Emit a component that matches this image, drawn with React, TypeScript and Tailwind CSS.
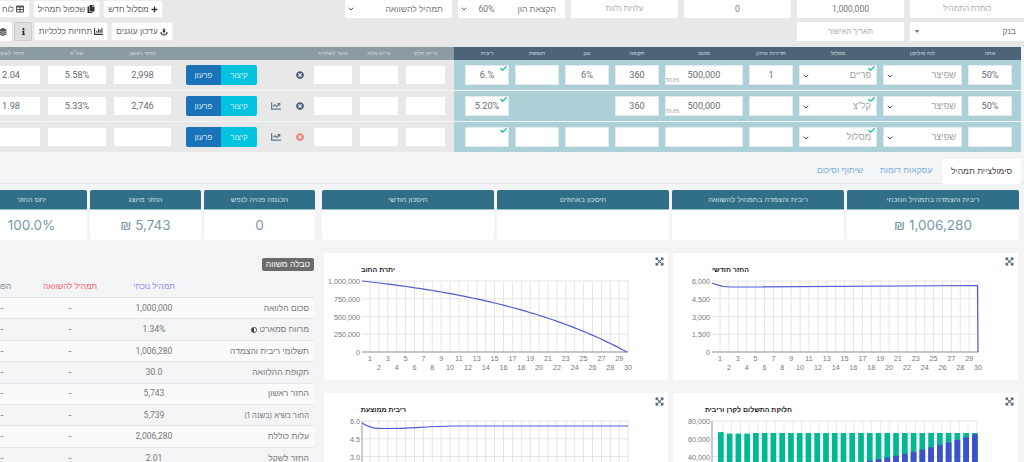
import { ChevronDown } from "lucide-react";
import {
  FaAdjust,
  FaAnchor,
  FaChartBar,
  FaChartLine,
  FaCheck,
  FaCopy,
  FaExpandArrowsAlt,
  FaInfo,
  FaLayerGroup,
  FaPlus,
  FaTable,
  FaTimesCircle,
} from "react-icons/fa";
import type { ReactNode } from "react";

const FONT = "font-['Inter','Liberation_Sans',sans-serif]";
const NARROW = "font-['Roboto','Liberation_Sans',sans-serif]";

function Field({ w, text, muted, select, check }: { w: string; text?: string; muted?: boolean; select?: boolean; check?: boolean }) {
  return (
    <div className={`${w} ${NARROW} h-[20px] relative shrink-0 bg-white border border-[#e6eaec] flex items-center text-[9.2px] ${select ? "justify-start pr-[5px]" : "justify-center"} ${muted ? "text-[#9aa0a6]" : "text-[#666c72]"}`}>
      <span dir={select ? "rtl" : "ltr"}>{text}</span>
      {select && <ChevronDown size={8} strokeWidth={3} className="absolute left-[2px] top-[6px] text-[#555]" />}
      {check && <FaCheck size={7} className="absolute right-[1px] top-[-1px] text-[#1fc9a0]" />}
    </div>
  );
}

function TopBox({ w, children, muted, select }: { w: string; children?: ReactNode; muted?: boolean; select?: boolean }) {
  return (
    <div className={`${w} ${NARROW} h-full shrink-0 relative bg-white flex items-center ${select ? "justify-start pr-[9px]" : "justify-center"} ${muted ? "text-[7.6px] text-[#a5a9ad]" : "text-[8.6px] text-[#777]"}`}>
      {children}
      {select && <ChevronDown size={8} strokeWidth={3} className="absolute left-[2px] top-[5px] text-[#555]" />}
    </div>
  );
}

function ToolBtn({ w, icon, text, cut }: { w: string; icon?: ReactNode; text?: string; cut?: boolean }) {
  return (
    <div className={`${w} h-full shrink-0 bg-white rounded-[2px] border border-[#eee] flex items-center gap-[2px] text-[8.3px] text-[#666] whitespace-nowrap ${cut ? "justify-start pr-[5px]" : "justify-center"}`}>
      {icon}
      {text}
    </div>
  );
}

function Toggle() {
  return (
    <div className="w-[71px] h-[20px] shrink-0 flex rounded-[2px] overflow-hidden text-[8px] text-[#cfe9f2]">
      <div className="w-[36px] bg-[#00c3e0] flex items-center justify-center">קיצור</div>
      <div className="w-[35px] bg-[#1a72b8] flex items-center justify-center">פרעון</div>
    </div>
  );
}

type RowData = {
  pct?: string;
  track: string;
  freq?: string;
  amount?: string;
  term?: string;
  anchor?: string;
  hasExtras: boolean;
  rate?: string;
  first?: string;
  shp?: string;
  ratio?: string;
  trend: boolean;
  danger?: boolean;
};

const ROWS: RowData[] = [
  { pct: "50%", track: "פריים", freq: "1", amount: "500,000", term: "360", anchor: "6%", hasExtras: true, rate: "6.%", first: "2,998", shp: "5.58%", ratio: "2.04", trend: false },
  { pct: "50%", track: 'קל"צ', amount: "500,000", term: "360", hasExtras: false, rate: "5.20%", first: "2,746", shp: "5.33%", ratio: "1.98", trend: true },
  { track: "מסלול", hasExtras: true, trend: true, danger: true },
];

function Row({ r, last }: { r: RowData; last: boolean }) {
  return (
    <div className={`flex h-[30px] pr-[3px] ${last ? "" : "mb-[1px]"}`}>
      <div className="w-[567px] shrink-0 bg-[#abd0d8] flex items-center gap-[6px] pr-[9px]">
        <Field w="w-[44px]" text={r.pct} />
        <Field w="w-[79px]" text="שפיצר" muted select />
        <Field w="w-[78px]" text={r.track} muted select check />
        <Field w="w-[44px]" text={r.freq} />
        <div className="relative">
          <Field w="w-[78px]" text={r.amount} />
          {r.amount && <span className="absolute left-[1px] bottom-[0px] text-[4.5px] text-[#888]">50.0%</span>}
        </div>
        <Field w="w-[44px]" text={r.term} />
        {r.hasExtras ? <Field w="w-[44px]" text={r.anchor} /> : <div className="w-[44px] shrink-0" />}
        {r.hasExtras ? <Field w="w-[44px]" /> : <div className="w-[44px] shrink-0" />}
        <Field w="w-[44px]" text={r.rate} check />
      </div>
      <div className="flex-1 bg-[#e8e8e8] flex items-center gap-[6px] pr-[8px]">
        <Field w="w-[41px]" />
        <Field w="w-[40px]" />
        <Field w="w-[40px]" />
        <div className="w-[44px] shrink-0 flex items-center text-[#4a5d78]">
          <FaTimesCircle size={8} className={`mr-[3px] ${r.danger ? "text-[#f27a7a]" : ""}`} />
          {r.trend && <FaChartLine size={10} className="mr-[15px] text-[#66788a]" />}
        </div>
        <Toggle />
        <div className="w-[2px] shrink-0" />
        <Field w="w-[59px]" text={r.first} />
        <Field w="w-[60px]" text={r.shp} />
        <Field w="w-[60px]" text={r.ratio} />
      </div>
    </div>
  );
}

function Head({ w, t }: { w: string; t?: string }) {
  return <div className={`${w} shrink-0 text-center whitespace-nowrap`}>{t}</div>;
}

const STATS = [
  { w: "w-[172px]", t: "ריבית והצמדה בתמהיל הנוכחי", v: "1,006,280 ₪" },
  { w: "w-[172px]", t: "ריבית והצמדה בתמהיל להשוואה" },
  { w: "w-[172px]", t: "חיסכון באחוזים" },
  { w: "w-[172px]", t: "חיסכון חודשי" },
  { w: "w-[111px] mr-[4px]", t: "הכנסה פנויה לנפש", v: "0" },
  { w: "w-[111px]", t: "החזר מיוצג", v: "5,743 ₪" },
  { w: "w-[111px]", t: "יחס החזר", v: "100.0%" },
];

const COMPARE: [ReactNode, string][] = [
  ["סכום הלוואה", "1,000,000"],
  [<span className="flex items-center gap-[2px]">מרווח סמארט <FaAdjust size={6} className="text-[#444]" /></span>, "1.34%"],
  ["תשלומי ריבית והצמדה", "1,006,280"],
  ["תקופת ההלוואה", "30.0"],
  ["החזר ראשון", "5,743"],
  [<span className="text-[7.5px]">החזר בשיא (בשנה 1)</span>, "5,739"],
  ["עלות כוללת", "2,006,280"],
  ["החזר לשקל", "2.01"],
];

const CATS = Array.from({ length: 30 }, (_, i) => i + 1);

function Axes({ yLabels, title, titleX, strongLeft }: { yLabels: string[]; title: string; titleX: number; strongLeft?: boolean }) {
  const x0 = 39;
  const y0 = 28;
  const step = 8.9;
  const hStep = 17.75;
  return (
    <g fontFamily="Liberation Sans, sans-serif" fontSize="7.2" fill="#777">
      <text x={titleX} y={y0 - 9} fontSize="7" fontWeight="bold" fill="#222" textAnchor="end">{title}</text>
      {CATS.map((c) => {
        const x = 47 + (c - 1) * step;
        return (
          <g key={c}>
            <line x1={x} x2={x} y1={y0} y2={y0 + 71} stroke="#e4e4e4" />
            <text x={x} y={y0 + 80 + (c % 2 === 0 ? 9 : 0)} textAnchor="middle">{c}</text>
          </g>
        );
      })}
      {yLabels.map((l, i) => (
        <g key={l}>
          <line x1={x0} x2={x0 + 266} y1={y0 + i * hStep} y2={y0 + i * hStep} stroke={i === 4 ? "#b5b5b5" : "#e4e4e4"} strokeWidth={i === 4 ? 1.5 : 1} />
          <text x={x0 - 2} y={y0 + i * hStep + 3} textAnchor="end">{l}</text>
        </g>
      ))}
      {strongLeft && <line x1={x0} x2={x0} y1={y0} y2={y0 + 71} stroke="#999" strokeWidth="1" />}
    </g>
  );
}

function ChartCard({ w, children }: { w: string; children: ReactNode }) {
  return (
    <div className={`${w} h-[127px] relative bg-white shrink-0`}>
      <FaExpandArrowsAlt size={9} className="absolute right-[4px] top-[4px] text-[#4a5d70]" />
      {children}
    </div>
  );
}

// the card svgs use card-relative coordinates
function MonthlyChart() {
  return (
    <svg width="345" height="127" className="block" direction="ltr">
      <Axes yLabels={["6,000", "4,500", "3,000", "1,500", "0"]} title="החזר חודשי" titleX={76} />
      <path d="M39 30 C44 32 48 34 58 34 C120 34 180 32.5 304.5 32.5 L305 99" fill="none" stroke="#4f5bd5" strokeWidth="1.2" />
    </svg>
  );
}

function BalanceChart() {
  const g = 1.055;
  const pts = Array.from({ length: 61 }, (_, i) => {
    const t = i / 2;
    const left = (Math.pow(g, 30) - Math.pow(g, t)) / (Math.pow(g, 30) - 1);
    return `${(39 + (t / 30) * 265).toFixed(1)},${(99 - left * 71).toFixed(1)}`;
  }).join(" ");
  return (
    <svg width="345" height="127" className="block" direction="ltr">
      <Axes yLabels={["1,000,000", "750,000", "500,000", "250,000", "0"]} title="יתרת החוב" titleX={72} />
      <polyline points={pts} fill="none" stroke="#4f5bd5" strokeWidth="1.2" />
    </svg>
  );
}

function SplitChart() {
  const scale = 71 / 80000;
  return (
    <svg width="345" height="127" className="block" direction="ltr">
      <g fontFamily="Liberation Sans, sans-serif" fontSize="7.2" fill="#777">
        <text x={119} y={19} fontSize="7" fontWeight="bold" fill="#222" textAnchor="end">חלוקת התשלום לקרן וריבית</text>
        {CATS.map((c) => (
          <line key={c} x1={41 + c * 8.76} x2={41 + c * 8.76} y1={28} y2={99} stroke="#ececec" />
        ))}
        {["80,000", "60,000", "40,000", "20,000"].map((l, i) => (
          <g key={l}>
            <line x1={39} x2={305} y1={28 + i * 17.75} y2={28 + i * 17.75} stroke="#e4e4e4" />
            <text x={37} y={31 + i * 17.75} textAnchor="end">{l}</text>
          </g>
        ))}
        <line x1={39} x2={39} y1={28} y2={99} stroke="#999" />
      </g>
      {CATS.map((c) => {
        const x = 45 + (c - 1) * 8.76;
        const top = c === 1 ? 67500 : c < 5 ? 65800 : 66500;
        const principal = 65000 * Math.pow(0.95, 30 - c);
        return (
          <g key={c}>
            <rect x={x} y={99 - top * scale} width={5.7} height={top * scale} fill="#00b894" />
            <rect x={x} y={99 - principal * scale} width={5.7} height={principal * scale} fill="#4050cc" />
          </g>
        );
      })}
    </svg>
  );
}

function RateChart() {
  return (
    <svg width="345" height="127" className="block" direction="ltr">
      <Axes yLabels={["6.0", "4.5", "3.0", "1.5", "0"]} title="ריבית ממוצעת" titleX={83} strongLeft />
      <path d="M39 30 C46 35 52 35.5 62 35.5 C90 35.5 100 33.5 130 33 L305 33" fill="none" stroke="#4f5bd5" strokeWidth="1.2" />
    </svg>
  );
}

export default function App() {
  return (
    <div dir="rtl" className={`${FONT} w-[1024px] h-[462px] overflow-hidden bg-[#f3f4f6]`}>
      <div className="w-[1024px] h-[47px] bg-[#e8e8e8] flex flex-col">
        <div className="h-[18px] flex gap-[6px] shrink-0">
          <TopBox w="w-[114px]" muted>כותרת התמהיל</TopBox>
          <TopBox w="w-[107px]">1,000,000</TopBox>
          <TopBox w="w-[107px]">0</TopBox>
          <TopBox w="w-[107px]" muted>עלויות נלוות</TopBox>
          <TopBox w="w-[107px]" select>
            <span className="flex gap-[23px]">
              <span>הקצאת הון</span>
              <span>60%</span>
            </span>
          </TopBox>
          <TopBox w="w-[107px]" select>תמהיל להשוואה</TopBox>
          <div className="w-[170px] shrink-0" />
          <div className="flex gap-[3px] h-full shrink-0">
            <ToolBtn w="w-[60px]" icon={<FaPlus size={7} className="text-[#333]" />} text="מסלול חדש" />
            <ToolBtn w="w-[67px]" icon={<FaCopy size={8} className="text-[#333]" />} text="שכפול תמהיל" />
            <ToolBtn w="w-[60px]" cut icon={<FaTable size={8} className="text-[#555]" />} text="לוח סילוקין" />
          </div>
        </div>
        <div className="h-[19px] mt-[4px] flex gap-[6px] shrink-0">
          <div className="w-[114px] h-full shrink-0 relative bg-white flex items-center pr-[8px] text-[8.6px] text-[#777]">
            בנק
            <span className="absolute left-[5px] top-[8px] w-0 h-0 border-x-[2px] border-t-[3px] border-x-transparent border-t-[#666]" />
          </div>
          <TopBox w="w-[107px]" muted>תאריך האישור</TopBox>
          <div className="w-[612px] shrink-0" />
          <div className="flex gap-[3px] h-full shrink-0">
            <ToolBtn w="w-[62px]" icon={<FaAnchor size={8} className="text-[#333]" />} text="עדכון עוגנים" />
            <ToolBtn w="w-[74px]" icon={<FaChartBar size={9} className="text-[#333]" />} text="תחזיות כלכליות" />
            <div className="w-[18px] h-full shrink-0 -mr-[1px] bg-[#dedede] border border-[#ccc] rounded-[2px] flex items-center justify-center">
              <FaInfo size={7} className="text-[#222]" />
            </div>
            <div className="w-[18px] h-full shrink-0 -mr-[1px] bg-white rounded-[2px] flex items-center justify-center">
              <FaLayerGroup size={8} className="text-[#555]" />
            </div>
          </div>
        </div>
      </div>

      <div className="flex h-[13px] pr-[3px] text-[5.5px] text-[#d0dade] items-center">
        <div className="w-[567px] h-full shrink-0 bg-[#4b6478] flex items-center gap-[6px] pr-[9px]">
          <Head w="w-[44px]" t="אחוז" />
          <Head w="w-[79px]" t="לוח סילוקין" />
          <Head w="w-[78px]" t="מסלול" />
          <Head w="w-[44px]" t="תדירות עדכון" />
          <Head w="w-[78px]" t="סכום" />
          <Head w="w-[44px]" t="תקופה" />
          <Head w="w-[44px]" t="עגן" />
          <Head w="w-[44px]" t="תוספת" />
          <Head w="w-[44px]" t="ריבית" />
        </div>
        <div className="flex-1 h-full bg-[#8c9ba1] flex items-center gap-[6px] pr-[8px]">
          <Head w="w-[41px]" t="גרייס חלקי" />
          <Head w="w-[40px]" t="גרייס מלא" />
          <Head w="w-[40px]" t="מועד לשחרור" />
          <Head w="w-[129px]" />
          <Head w="w-[59px]" t="החזר ראשון" />
          <Head w="w-[60px]" t={'שת"פ'} />
          <Head w="w-[60px]" t="החזר לשקל" />
        </div>
      </div>
      {ROWS.map((r, i) => (
        <Row key={i} r={r} last={i === ROWS.length - 1} />
      ))}

      <div className="h-[32px] border-b border-[#e3e6e9] flex items-end pr-[3px] text-[8.5px]">
        <div className="w-[79px] h-[25px] -mb-[1px] bg-white flex items-center justify-center text-[#444]">סימולציית תמהיל</div>
        <div className="w-[72px] h-[25px] flex items-center justify-center text-[#7aaedb]">עסקאות דומות</div>
        <div className="w-[60px] h-[25px] flex items-center justify-center text-[#7aaedb]">שיתוף וסיכום</div>
      </div>

      <div className="flex gap-[3px] pr-[5px] mt-[6px]">
        {STATS.map((s) => (
          <div key={s.t} className={`${s.w} h-[50px] shrink-0 bg-white rounded-[2px] overflow-hidden`}>
            <div className="h-[20px] bg-[#316e87] flex items-center justify-center text-[7.4px] text-[#cfe0e6] whitespace-nowrap border-b border-[#8fc5c5]">{s.t}</div>
            <div className="h-[30px] flex items-center justify-center text-[13.5px] text-[#7a98aa]">{s.v}</div>
          </div>
        ))}
      </div>

      <div className="flex mt-[13px] pr-[6px]">
        <div className="flex flex-col gap-[13px] shrink-0">
          <ChartCard w="w-[345px]"><MonthlyChart /></ChartCard>
          <ChartCard w="w-[345px]"><SplitChart /></ChartCard>
        </div>
        <div className="flex flex-col gap-[13px] shrink-0 mr-[5px]">
          <ChartCard w="w-[344px]"><BalanceChart /></ChartCard>
          <ChartCard w="w-[344px]"><RateChart /></ChartCard>
        </div>
        <div className="w-[320px] shrink-0 mr-[10px]">
          <div className="mt-[5px] w-[52px] h-[13px] bg-[#6b6b6b] rounded-[2px] flex items-center justify-center text-[8.5px] text-white">טבלה משווה</div>
          <div className="flex h-[21px] mt-[6px] items-center border-b border-[#dfe2e5] text-[8px] whitespace-nowrap pb-[2px]">
            <div className="w-[105px] shrink-0" />
            <div className="w-[110px] shrink-0 text-center text-[#8a8ae6]">תמהיל נוכחי</div>
            <div className="w-[58px] shrink-0 text-center text-[#f0606a]">תמהיל להשוואה</div>
            <div className="w-[18px] shrink-0 mr-[30px] text-center text-[#777]">הפרש</div>
          </div>
          {COMPARE.map(([label, value], i) => (
            <div key={i} className={`flex h-[21.4px] items-center border-b border-[#e5e7ea] text-[8.5px] text-[#777] ${i % 2 === 0 ? "bg-[#fafafa]" : "bg-[#f3f4f6]"}`}>
              <div className="w-[105px] shrink-0 pr-[5px] whitespace-nowrap">{label}</div>
              <div className={`${NARROW} w-[110px] shrink-0 text-center`}>{value}</div>
              <div className="w-[58px] shrink-0 text-center">-</div>
              <div className="w-[18px] shrink-0 mr-[30px] text-center">-</div>
            </div>
          ))}
        </div>
      </div>
    </div>
  );
}
